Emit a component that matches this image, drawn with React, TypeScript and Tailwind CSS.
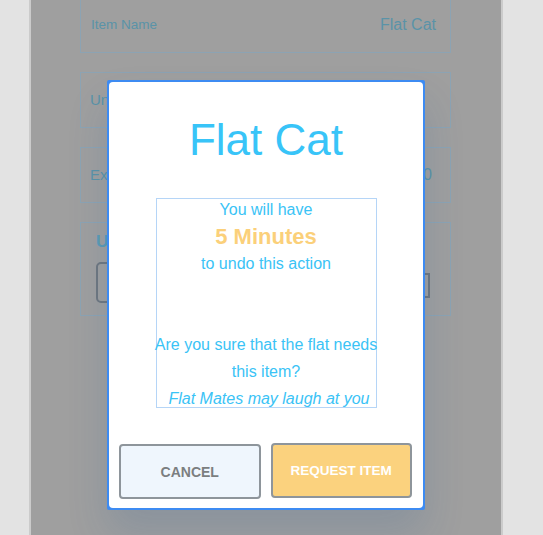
import React from "react";

export default function App() {
  const font = { fontFamily: '"Liberation Sans", Arial, sans-serif' };
  return (
    <div className="w-[543px] h-[535px] overflow-hidden bg-[#e3e3e3]" style={font}>
      <div className="relative ml-[29px] w-[474px] h-[535px] border-x-2 border-[#cbcbcb] bg-[#9f9f9f] pl-[49px] pr-[50px] flex flex-col gap-[19px]">
        {/* Field 1 */}
        <div className="-mt-[3px] h-[56px] border border-[#8ca3b3] flex items-center justify-between pl-[10px] pr-[14px]">
          <span className="text-[13.5px] text-[#5a93a8]">Item Name</span>
          <span className="text-[16px] text-[#5a93a8]">Flat Cat</span>
        </div>
        {/* Field 2 */}
        <div className="h-[56px] border border-[#8ca3b3] flex items-center pl-[9px] pr-[14px]">
          <span className="text-[15px] text-[#5a93a8]">Units Needed</span>
        </div>
        {/* Field 3 */}
        <div className="h-[56px] border border-[#8ca3b3] flex items-center justify-between pl-[9px] pr-[18px]">
          <span className="text-[15px] text-[#5a93a8]">Expected Price</span>
          <span className="text-[16px] text-[#5a93a8]">£0.00</span>
        </div>
        {/* Field 4 */}
        <div className="h-[94px] border border-[#8ca3b3] pl-[15px] pr-[20px] pt-[9px]">
          <div className="text-[17px] leading-[20px] font-bold text-[#5b9ab4]">Urgency</div>
          <div className="mt-[10px] flex items-center justify-between h-[41px]">
            <div className="w-[120px] h-[41px] rounded-[5px] border-2 border-[#6f777f]"></div>
            <div className="mt-[6px] w-[60px] h-[25px] border-2 border-[#6f777f]"></div>
          </div>
        </div>

        {/* Modal */}
        <div className="absolute left-[76px] top-[80px] w-[318px] rounded-[2px] bg-[#3d8bf2] p-[2px] shadow-[0_24px_40px_rgba(30,90,150,0.16)]">
          <div className="bg-white rounded-[4px] flex flex-col items-center">
            <div className="pt-[36px] text-[44px] leading-[44px] text-[#38c4f8]">Flat Cat</div>
            <div className="mt-[36px] w-[221px] h-[210px] border border-[#b5d5f7] pt-[1px] flex flex-col items-center text-[#3ac3f6] text-[16px] whitespace-nowrap">
              <div className="leading-[19px]">You will have</div>
              <div className="leading-[36px] text-[22px] font-bold text-[#fbd07a]">5 Minutes</div>
              <div className="leading-[18px]">to undo this action</div>
              <div className="mt-[58px] leading-[27px]">Are you sure that the flat needs</div>
              <div className="leading-[27px]">this item?</div>
              <div className="mt-[3px] leading-[22px] italic pl-[6px]">Flat Mates may laugh at you</div>
            </div>
            <div className="mt-[36px] w-full flex gap-[10px] pl-[10px] pr-[11px] pb-[9px]">
              <button className="flex-1 h-[55px] pt-[2px] rounded-[4px] border-2 border-[#8e959b] bg-[#eff6fd] text-[14px] font-bold text-[#7b7e80]">
                CANCEL
              </button>
              <button className="flex-1 h-[55px] -mt-[1px] pt-[1px] rounded-[4px] border-2 border-[#8e959b] bg-[#fbd27e] text-[13.5px] font-bold text-white">
                REQUEST ITEM
              </button>
            </div>
          </div>
        </div>
      </div>
    </div>
  );
}
